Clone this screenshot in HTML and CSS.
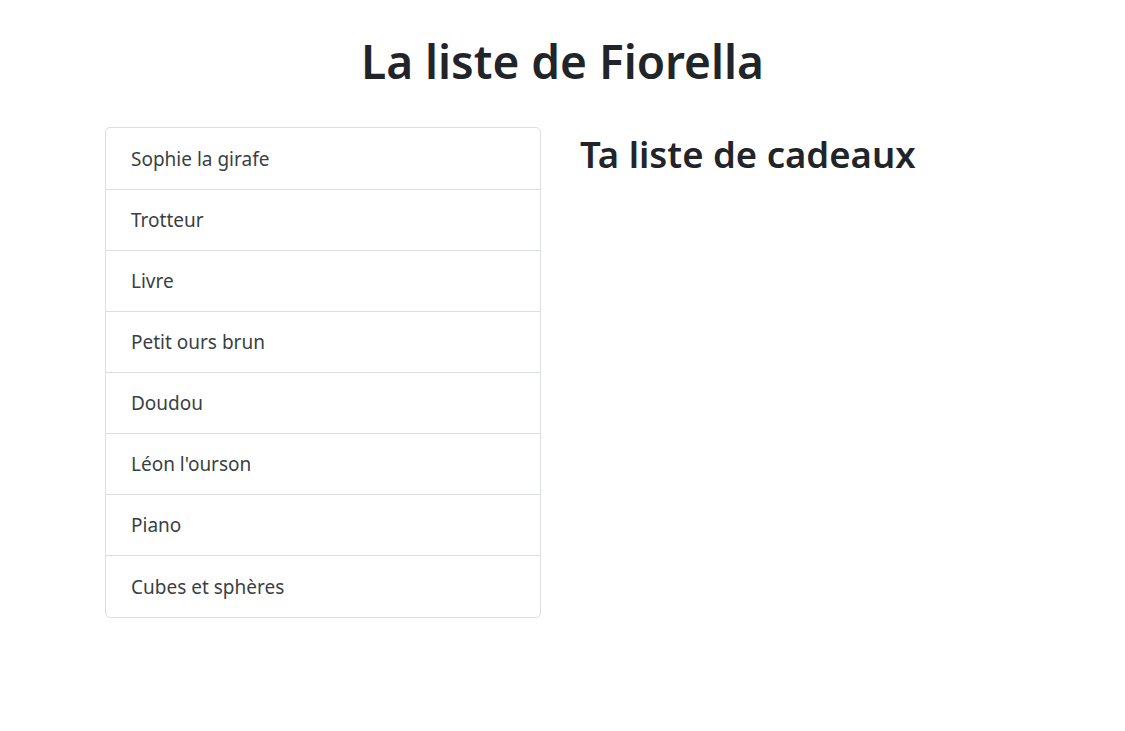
FILE: index.html
```html
<!DOCTYPE html>
<html lang="fr">
<head>
<meta charset="utf-8">
<title>La liste de Fiorella</title>
<link rel="stylesheet" href="styles.css">
</head>
<body>
<h1 class="title">La liste de Fiorella</h1>
<div class="row">
  <ul class="list">
    <li class="item">Sophie la girafe</li>
    <li class="item">Trotteur</li>
    <li class="item">Livre</li>
    <li class="item">Petit ours brun</li>
    <li class="item">Doudou</li>
    <li class="item">Léon l'ourson</li>
    <li class="item">Piano</li>
    <li class="item">Cubes et sphères</li>
  </ul>
  <div class="side">
    <h2 class="subtitle">Ta liste de cadeaux</h2>
  </div>
</div>
</body>
</html>
```
FILE: styles.css
```css
html, body {
  margin: 0;
  padding: 0;
  background: #fff;
}
body {
  font-family: "Noto Sans", "Open Sans", sans-serif;
  color: #212529;
  width: 1125px;
}
.title {
  margin: 0;
  padding-top: 31px;
  height: 127px;
  box-sizing: border-box;
  text-align: center;
  font-size: 46px;
  line-height: 60px;
  font-weight: 600;
  color: #212529;
}
.row {
  display: flex;
  align-items: flex-start;
  padding-left: 105px;
}
.list {
  list-style: none;
  margin: 0;
  padding: 0;
  width: 436px;
  box-sizing: border-box;
  border: 1px solid #dcdfe2;
  border-radius: 5px;
}
.item {
  height: 61px;
  box-sizing: border-box;
  padding: 0 25px;
  display: flex;
  align-items: center;
  font-size: 19px;
  color: #3a3f44;
  border-top: 1px solid #dcdfe2;
}
.item:first-child {
  border-top: none;
}
.item:last-child {
  height: 62px;
}
.side {
  padding-left: 39px;
}
.subtitle {
  margin: 0;
  padding-top: 1px;
  font-size: 36.5px;
  line-height: 52px;
  font-weight: 600;
  color: #212529;
}
```
